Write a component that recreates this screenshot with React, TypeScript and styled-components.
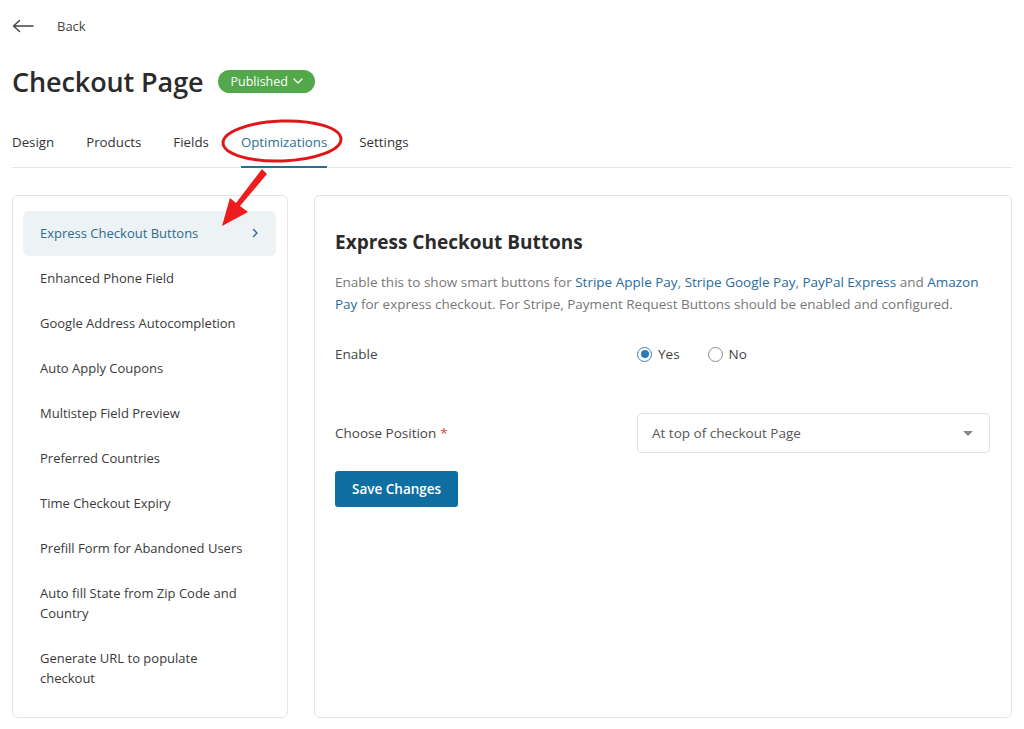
import React from "react";
import styled, { createGlobalStyle } from "styled-components";

const Global = createGlobalStyle`
  html, body { margin: 0; padding: 0; background: #ffffff; }
  body { font-family: "Open Sans", "Noto Sans", Arial, sans-serif; color: #333; }
  * { box-sizing: border-box; }
`;

const Page = styled.div`
  position: relative;
  width: 1024px;
  min-height: 729px;
  padding: 14px 12px 0 12px;
`;

const BackRow = styled.div`
  display: flex;
  align-items: center;
  gap: 23px;
  height: 24px;
  font-size: 13px;
  color: #444;
`;

const TitleRow = styled.div`
  display: flex;
  align-items: center;
  gap: 14px;
  margin-top: 25px;
  height: 36px;
`;

const Title = styled.h1`
  margin: 0;
  font-size: 27px;
  font-weight: 600;
  color: #2b2b2b;
  letter-spacing: -0.1px;
`;

const Badge = styled.span`
  display: inline-flex;
  align-items: center;
  gap: 5px;
  height: 23px;
  padding: 0 12px 0 13px;
  border-radius: 12px;
  background: #52a84a;
  color: #fff;
  font-size: 12.5px;
  font-weight: 500;
`;

const Tabs = styled.nav`
  display: flex;
  gap: 32px;
  margin-top: 29px;
  border-bottom: 1px solid #e6e6e6;
`;

const Tab = styled.div<{ $active?: boolean }>`
  padding: 5px 0 15px 0;
  font-size: 13.3px;
  font-weight: 500;
  color: ${(p) => (p.$active ? "#2d6d94" : "#333")};
  border-bottom: 2px solid ${(p) => (p.$active ? "#2d6d94" : "transparent")};
  margin-bottom: -1px;
`;

const Layout = styled.div`
  display: grid;
  grid-template-columns: 276px 698px;
  column-gap: 26px;
  margin-top: 27px;
`;

const Card = styled.div`
  border: 1px solid #e4e4e4;
  border-radius: 6px;
  background: #fff;
  height: 523px;
`;

const Sidebar = styled(Card)`
  padding: 15px 10px;
  display: flex;
  flex-direction: column;
`;

const NavItem = styled.div<{ $active?: boolean }>`
  display: flex;
  align-items: center;
  justify-content: space-between;
  padding: 12px 17px 13px 17px;
  border-radius: 6px;
  font-size: 13px;
  line-height: 20px;
  color: ${(p) => (p.$active ? "#2e6a8e" : "#3a3a3a")};
  background: ${(p) => (p.$active ? "#edf2f5" : "transparent")};
  max-width: 253px;
`;

const NavText = styled.span`
  max-width: 205px;
`;

const Main = styled(Card)`
  padding: 33px 20px;
`;

const Heading = styled.h2`
  margin: 0;
  font-size: 19px;
  font-weight: 700;
  color: #2b2b2b;
  line-height: 26px;
`;

const Desc = styled.p`
  margin: 16px 0 0 0;
  font-size: 13.5px;
  line-height: 22px;
  color: #777;
`;

const Link = styled.span`
  color: #2a6c98;
`;

const FormRow = styled.div<{ $h: number; $mt: number }>`
  display: grid;
  grid-template-columns: 302px 353px;
  align-items: center;
  height: ${(p) => p.$h}px;
  margin-top: ${(p) => p.$mt}px;
`;

const Label = styled.div`
  font-size: 13.5px;
  color: #444;
`;

const Req = styled.span`
  color: #d9403a;
  margin-left: 4px;
`;

const RadioGroup = styled.div`
  display: flex;
  align-items: center;
  gap: 28px;
`;

const RadioOpt = styled.label`
  display: flex;
  align-items: center;
  gap: 6px;
  font-size: 13.5px;
  color: #444;
`;

const RadioCircle = styled.span<{ $checked?: boolean }>`
  width: 15px;
  height: 15px;
  border-radius: 50%;
  border: 1px solid ${(p) => (p.$checked ? "#3b7fb3" : "#8c8c8c")};
  display: inline-flex;
  align-items: center;
  justify-content: center;
  &::after {
    content: "";
    width: 8px;
    height: 8px;
    border-radius: 50%;
    background: ${(p) => (p.$checked ? "#2f78b3" : "transparent")};
  }
`;

const Select = styled.div`
  height: 40px;
  border: 1px solid #e2e2e2;
  border-radius: 4px;
  display: flex;
  align-items: center;
  justify-content: space-between;
  padding: 0 16px 0 14px;
  font-size: 13.5px;
  color: #555;
`;

const Caret = styled.span`
  width: 0;
  height: 0;
  border-left: 5px solid transparent;
  border-right: 5px solid transparent;
  border-top: 5px solid #888;
`;

const SaveButton = styled.button`
  margin-top: 18px;
  height: 36px;
  padding: 0 17px;
  border: none;
  border-radius: 3px;
  background: #0f6fa2;
  color: #fff;
  font-family: inherit;
  font-size: 13.5px;
  font-weight: 600;
`;

const Overlay = styled.svg`
  position: absolute;
  left: 0;
  top: 0;
  pointer-events: none;
`;

const items = [
  "Enhanced Phone Field",
  "Google Address Autocompletion",
  "Auto Apply Coupons",
  "Multistep Field Preview",
  "Preferred Countries",
  "Time Checkout Expiry",
  "Prefill Form for Abandoned Users",
  "Auto fill State from Zip Code and Country",
  "Generate URL to populate checkout",
];

export default function App() {
  return (
    <>
      <Global />
      <Page>
        <BackRow>
          <svg width="22" height="14" viewBox="0 0 22 14" fill="none">
            <path d="M21 7H2M7.5 1.5L1.5 7l6 5.5" stroke="#444" strokeWidth="1.4" strokeLinecap="round" strokeLinejoin="round" />
          </svg>
          <span>Back</span>
        </BackRow>
        <TitleRow>
          <Title>Checkout Page</Title>
          <Badge>
            Published
            <svg width="10" height="6" viewBox="0 0 10 6" fill="none">
              <path d="M1 1l4 4 4-4" stroke="#fff" strokeWidth="1.2" strokeLinecap="round" strokeLinejoin="round" />
            </svg>
          </Badge>
        </TitleRow>
        <Tabs>
          <Tab>Design</Tab>
          <Tab>Products</Tab>
          <Tab>Fields</Tab>
          <Tab $active>Optimizations</Tab>
          <Tab>Settings</Tab>
        </Tabs>
        <Layout>
          <Sidebar>
            <NavItem $active>
              <NavText>Express Checkout Buttons</NavText>
              <svg width="8" height="10" viewBox="0 0 8 10" fill="none">
                <path d="M2.5 1.5L6 5l-3.5 3.5" stroke="#2e6a8e" strokeWidth="1.4" strokeLinecap="round" strokeLinejoin="round" />
              </svg>
            </NavItem>
            {items.map((t) => (
              <NavItem key={t}>
                <NavText>{t}</NavText>
              </NavItem>
            ))}
          </Sidebar>
          <Main>
            <Heading>Express Checkout Buttons</Heading>
            <Desc>
              Enable this to show smart buttons for <Link>Stripe Apple Pay</Link>, <Link>Stripe Google Pay</Link>,{" "}
              <Link>PayPal Express</Link> and <Link>Amazon Pay</Link> for express checkout. For Stripe, Payment Request
              Buttons should be enabled and configured.
            </Desc>
            <FormRow $h={40} $mt={19}>
              <Label>Enable</Label>
              <RadioGroup>
                <RadioOpt>
                  <RadioCircle $checked />
                  Yes
                </RadioOpt>
                <RadioOpt>
                  <RadioCircle />
                  No
                </RadioOpt>
              </RadioGroup>
            </FormRow>
            <FormRow $h={40} $mt={39}>
              <Label>
                Choose Position<Req>*</Req>
              </Label>
              <Select>
                <span>At top of checkout Page</span>
                <Caret />
              </Select>
            </FormRow>
            <SaveButton>Save Changes</SaveButton>
          </Main>
        </Layout>
        <Overlay width="1024" height="729" viewBox="0 0 1024 729">
          <ellipse cx="282" cy="141" rx="59" ry="20" fill="none" stroke="#e0161b" strokeWidth="3" transform="rotate(-2 282 141)" />
          <path
            d="M262 169 L267 174 L240 206 L248 212 L222 226 L230 198 L236 203 Z"
            fill="#ee1c1c"
          />
        </Overlay>
      </Page>
    </>
  );
}
